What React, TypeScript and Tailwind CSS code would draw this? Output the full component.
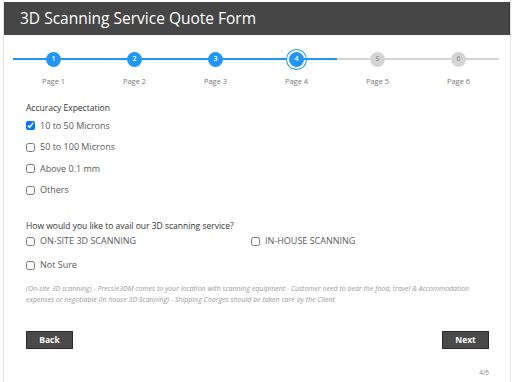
import React from "react"

const steps = [1, 2, 3, 4, 5, 6]
const current = 4

type CheckProps = {
  label: string,
  checked?: boolean,
}

function CheckOption({ label, checked = false }: CheckProps) {
  return (
    <label className="flex items-center gap-[5px]">
      <input
        type="checkbox"
        defaultChecked={checked}
        className="m-0 w-[9px] h-[9px] accent-[#0075ff]"
      />
      <span className="text-[9px] leading-[12px] text-[#5a5a5a]">{label}</span>
    </label>
  )
}

function Stepper() {
  return (
    <div className="flex pl-[9px] mt-[16px]">
      {steps.map((step) => {
        const done = step <= current
        return (
          <div key={step} className="w-[81px] flex flex-col items-center">
            <div className="w-full flex items-center h-[16px]">
              <div className={done ? "flex-1 h-[2px] bg-[#2196f3]" : "flex-1 h-[2px] bg-[#d4d4d4]"} />
              <div
                className={
                  step === current
                    ? "w-[15px] h-[15px] rounded-full bg-[#2196f3] text-white flex items-center justify-center text-[7px] font-semibold shadow-[0_0_0_2px_white,0_0_0_3px_#2196f3]"
                    : done
                    ? "w-[15px] h-[15px] rounded-full bg-[#2196f3] text-white flex items-center justify-center text-[7px] font-semibold"
                    : "w-[15px] h-[15px] rounded-full bg-[#d4d4d4] text-[#999] flex items-center justify-center text-[7px] font-semibold"
                }
              >
                {step}
              </div>
              <div className={done ? "flex-1 h-[2px] bg-[#2196f3]" : "flex-1 h-[2px] bg-[#d4d4d4]"} />
            </div>
            <div className="mt-[9px] text-[7.5px] leading-[10px] text-[#777]">Page {step}</div>
          </div>
        )
      })}
    </div>
  )
}

export default function App() {
  return (
    <div className="w-[512px] h-[382px] bg-white overflow-hidden" style={{ fontFamily: "'Open Sans', 'Noto Sans', sans-serif" }}>
      <div className="ml-[3px] w-[508px] h-full border-x border-[#e2e2e2] pt-[2px] flex flex-col">
        <div className="h-[33px] bg-[#464646] flex items-center pl-[16px] border-r border-[#333]">
          <h1 className="text-white text-[15.5px] leading-none">3D Scanning Service Quote Form</h1>
        </div>

        <Stepper />

        <div className="pl-[22px] pr-[21px] flex flex-col">
          <div className="mt-[16px] text-[8.5px] leading-[12px] text-[#333]">Accuracy Expectation</div>
          <div className="flex flex-col mt-[1px]">
            <div className="h-[21.5px] flex items-center"><CheckOption label="10 to 50 Microns" checked /></div>
            <div className="h-[21.5px] flex items-center"><CheckOption label="50 to 100 Microns" /></div>
            <div className="h-[21.5px] flex items-center"><CheckOption label="Above 0.1 mm" /></div>
            <div className="h-[21.5px] flex items-center"><CheckOption label="Others" /></div>
          </div>

          <div className="mt-[19px] text-[8.5px] leading-[12px] text-[#333]">How would you like to avail our 3D scanning service?</div>
          <div className="grid grid-cols-[225px_1fr] -mt-[1px]">
            <div className="h-[20px] flex items-center"><CheckOption label="ON-SITE 3D SCANNING" /></div>
            <div className="h-[20px] flex items-center"><CheckOption label="IN-HOUSE SCANNING" /></div>
            <div className="h-[28px] flex items-center"><CheckOption label="Not Sure" /></div>
          </div>

          <p className="mt-[4px] text-[7px] leading-[11px] italic text-[#9a9a9a] whitespace-nowrap">
            (On-site 3D scanning) - Precsie3DM comes to your location with scanning equipment - Customer need to bear the food, travel &amp; Accommodation
            <br />
            expenses or negotiable (In house 3D Scanning) - Shipping Charges should be taken care by the Client
          </p>

          <div className="flex justify-between mt-[26px]">
            <button className="w-[47px] h-[18px] bg-[#4a4a4a] border border-[#2a2a2a] text-white text-[8.5px] font-bold">Back</button>
            <button className="w-[47px] h-[18px] bg-[#4a4a4a] border border-[#2a2a2a] text-white text-[8.5px] font-bold">Next</button>
          </div>

          <div className="mt-[19px] text-right text-[6.5px] leading-[10px] text-[#888]">4/6</div>
        </div>
      </div>
    </div>
  )
}
